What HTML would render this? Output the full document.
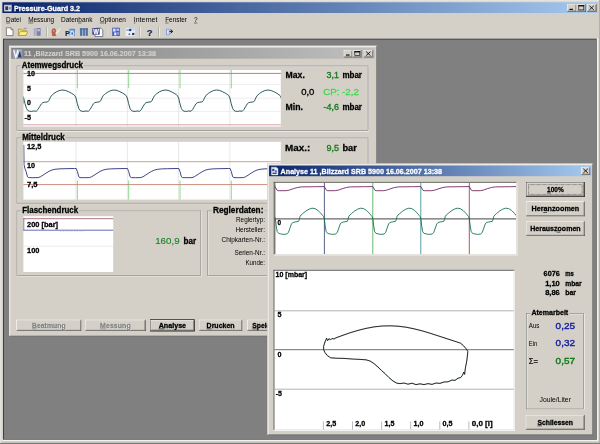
<!DOCTYPE html>
<html lang="de">
<head>
<meta charset="utf-8">
<title>Pressure-Guard 3.2</title>
<style>
html,body{margin:0;padding:0;background:#d4d0c8;overflow:hidden}
svg{display:block;will-change:transform}
svg text{font-family:"Liberation Sans",sans-serif;white-space:pre}
</style>
</head>
<body>
<svg width="600" height="444" viewBox="0 0 600 444">
<filter id="soft" x="-1%" y="-1%" width="102%" height="102%"><feGaussianBlur stdDeviation="0.35"/></filter>
<rect x="-5" y="-5" width="610" height="454" fill="#d4d0c8"/>
<g filter="url(#soft)">
<rect x="-5" y="-5" width="610" height="454" fill="#d4d0c8"/>
<rect x="0" y="0" width="600" height="444" fill="#d4d0c8"/>
<rect x="0" y="0" width="600" height="0.6" fill="#d4d0c8"/>
<rect x="0" y="0" width="0.6" height="444" fill="#d4d0c8"/>
<rect x="0.6" y="0.6" width="598.8" height="0.6" fill="#fff"/>
<rect x="0.6" y="0.6" width="0.6" height="442.8" fill="#fff"/>
<rect x="0" y="443.4" width="600" height="0.6" fill="#404040"/>
<rect x="599.6" y="0" width="0.4" height="444" fill="#808080"/>
<rect x="0.6" y="442.8" width="599" height="0.6" fill="#808080"/>
<defs><linearGradient id="ga" x1="0" x2="1" y1="0" y2="0"><stop offset="0" stop-color="#0a246a"/><stop offset="1" stop-color="#a6caf0"/></linearGradient><linearGradient id="gi" x1="0" x2="1" y1="0" y2="0"><stop offset="0" stop-color="#808080"/><stop offset="1" stop-color="#c0c0c0"/></linearGradient><clipPath id="c1"><rect x="23.4" y="70" width="257.4" height="56.6"/></clipPath><clipPath id="c2"><rect x="23.4" y="141.8" width="257.4" height="57.8"/></clipPath><clipPath id="c3"><rect x="274.6" y="182.4" width="241.4" height="71.6"/></clipPath></defs>
<rect x="2.4" y="2.3" width="595.2" height="10.7" fill="url(#ga)"/>
<rect x="4.2" y="4.2" width="7.4" height="7.2" fill="#e8e8f0"/>
<rect x="4.2" y="4.2" width="7.4" height="1" fill="#1c2c80"/>
<rect x="5.3" y="6.3" width="2.9" height="3.9" fill="#303848"/>
<rect x="8.8" y="6.8" width="2" height="2.8" fill="#8090b0"/>
<text x="14" y="10.9" font-size="7.6" fill="#fff" stroke="#fff" stroke-width="0.28" font-weight="bold" textLength="66" lengthAdjust="spacingAndGlyphs">Pressure-Guard 3.2</text>
<rect x="567.2" y="4" width="9.4" height="7.7" fill="#d4d0c8"/>
<rect x="567.2" y="4" width="9.4" height="0.6" fill="#fff"/>
<rect x="567.2" y="4" width="0.6" height="7.7" fill="#fff"/>
<rect x="567.2" y="11.1" width="9.4" height="0.6" fill="#404040"/>
<rect x="576" y="4" width="0.6" height="7.7" fill="#404040"/>
<rect x="567.8" y="4.6" width="8.2" height="0.6" fill="#d4d0c8"/>
<rect x="567.8" y="4.6" width="0.6" height="6.5" fill="#d4d0c8"/>
<rect x="567.8" y="10.5" width="8.2" height="0.6" fill="#808080"/>
<rect x="575.4" y="4.6" width="0.6" height="6.5" fill="#808080"/>
<rect x="569.4" y="8.8" width="3.6" height="1.1" fill="#000"/>
<rect x="576.6" y="4" width="9.3" height="7.7" fill="#d4d0c8"/>
<rect x="576.6" y="4" width="9.3" height="0.6" fill="#fff"/>
<rect x="576.6" y="4" width="0.6" height="7.7" fill="#fff"/>
<rect x="576.6" y="11.1" width="9.3" height="0.6" fill="#404040"/>
<rect x="585.3" y="4" width="0.6" height="7.7" fill="#404040"/>
<rect x="577.2" y="4.6" width="8.1" height="0.6" fill="#d4d0c8"/>
<rect x="577.2" y="4.6" width="0.6" height="6.5" fill="#d4d0c8"/>
<rect x="577.2" y="10.5" width="8.1" height="0.6" fill="#808080"/>
<rect x="584.7" y="4.6" width="0.6" height="6.5" fill="#808080"/>
<rect x="578.8" y="5.6" width="5" height="4.3" fill="none" stroke="#000" stroke-width="0.6"/>
<rect x="578.5" y="5.3" width="5.6" height="1.1" fill="#000"/>
<rect x="587.1" y="4" width="9.4" height="7.7" fill="#d4d0c8"/>
<rect x="587.1" y="4" width="9.4" height="0.6" fill="#fff"/>
<rect x="587.1" y="4" width="0.6" height="7.7" fill="#fff"/>
<rect x="587.1" y="11.1" width="9.4" height="0.6" fill="#404040"/>
<rect x="595.9" y="4" width="0.6" height="7.7" fill="#404040"/>
<rect x="587.7" y="4.6" width="8.2" height="0.6" fill="#d4d0c8"/>
<rect x="587.7" y="4.6" width="0.6" height="6.5" fill="#d4d0c8"/>
<rect x="587.7" y="10.5" width="8.2" height="0.6" fill="#808080"/>
<rect x="595.3" y="4.6" width="0.6" height="6.5" fill="#808080"/>
<path d="M589.4 5.75 L593.8 9.85 M593.8 5.75 L589.4 9.85" stroke="#000" stroke-width="0.85" fill="none"/>
<text x="6" y="21.9" font-size="6.6" fill="#000" textLength="15" lengthAdjust="spacingAndGlyphs">Datei</text>
<rect x="6" y="22.7" width="4.2" height="0.6" fill="#000" opacity="0.75"/>
<text x="28.2" y="21.9" font-size="6.6" fill="#000" textLength="26" lengthAdjust="spacingAndGlyphs">Messung</text>
<rect x="28.2" y="22.7" width="5.1" height="0.6" fill="#000" opacity="0.75"/>
<text x="61" y="21.9" font-size="6.6" fill="#000" textLength="31.5" lengthAdjust="spacingAndGlyphs">Datenbank</text>
<rect x="78" y="22.7" width="3.4" height="0.6" fill="#000" opacity="0.75"/>
<text x="99.7" y="21.9" font-size="6.6" fill="#000" textLength="26.2" lengthAdjust="spacingAndGlyphs">Optionen</text>
<rect x="99.7" y="22.7" width="4.7" height="0.6" fill="#000" opacity="0.75"/>
<text x="133.8" y="21.9" font-size="6.6" fill="#000" textLength="23.6" lengthAdjust="spacingAndGlyphs">Internet</text>
<rect x="133.8" y="22.7" width="1.6" height="0.6" fill="#000" opacity="0.75"/>
<text x="165.2" y="21.9" font-size="6.6" fill="#000" textLength="21.8" lengthAdjust="spacingAndGlyphs">Fenster</text>
<rect x="165.2" y="22.7" width="3.4" height="0.6" fill="#000" opacity="0.75"/>
<text x="194" y="21.9" font-size="6.6" fill="#000" textLength="3.6" lengthAdjust="spacingAndGlyphs">?</text>
<rect x="194" y="22.7" width="3.4" height="0.6" fill="#000" opacity="0.75"/>
<path d="M6.4 27.8 H11 L13 29.8 V35.6 H6.4 Z" stroke="#404040" stroke-width="0.6" fill="#fff"/>
<path d="M11 27.8 V29.8 H13" stroke="#404040" stroke-width="0.5" fill="none"/>
<path d="M18.4 29.2 H21.4 L22.2 30.2 H26 V35.4 H18.4 Z" stroke="#807020" stroke-width="0.5" fill="#f0d850"/>
<path d="M18.4 35.4 L20.4 31.6 H27.6 L26 35.4 Z" stroke="#807020" stroke-width="0.5" fill="#fff080"/>
<path d="M23.6 28.6 Q25.6 27.4 27 28.8" stroke="#606060" stroke-width="0.5" fill="none"/>
<rect x="33.6" y="28" width="2.4" height="7.8" fill="#a8b0c8"/>
<rect x="36.6" y="28" width="4" height="7.8" fill="#7880b0"/>
<rect x="37.4" y="29.2" width="2.4" height="2" fill="#c8ccdc"/>
<rect x="46.3" y="26.8" width="0.6" height="10.2" fill="#909090"/>
<rect x="46.9" y="26.8" width="0.6" height="10.2" fill="#fff"/>
<path d="M52.0 34.0 Q50.8 30.6 52.6 28.8 Q54.6 27.6 55.8 29.4 Q56.6 31.6 55.2 33.0 L56.4 35.6 Q53.6 36.8 52.0 35.6 Z" stroke="none" stroke-width="0" fill="#b8604c"/>
<path d="M52.8 30.2 Q53.8 29.2 54.8 30.0 Q55.0 31.8 53.8 32.6 Q52.8 31.6 52.8 30.2 Z" stroke="none" stroke-width="0" fill="#d89078"/>
<path d="M55.4 33.6 L59.8 28.0 L60.6 28.8 L56.8 34.6 Z" stroke="none" stroke-width="0" fill="#f4ecdc"/>
<path d="M55.0 35.2 L56.2 33.4" stroke="#a08070" stroke-width="0.5" fill="none"/>
<rect x="69.6" y="28.8" width="5.2" height="6.8" fill="#3c78c8"/>
<rect x="70.4" y="29.6" width="3.6" height="1.6" fill="#80b0e8"/>
<text x="65.3" y="35.7" font-size="6.6" fill="#101c50" stroke="#101c50" stroke-width="0.2" font-weight="bold" textLength="4.4" lengthAdjust="spacingAndGlyphs">P</text>
<text x="70" y="35.7" font-size="6.6" fill="#d8e8ff" stroke="#d8e8ff" stroke-width="0.28" font-weight="bold" textLength="4.4" lengthAdjust="spacingAndGlyphs">D</text>
<rect x="79.8" y="28.4" width="8.2" height="7.4" fill="#a8b8d0"/>
<rect x="80" y="28.4" width="2" height="7.4" fill="#5070a0"/>
<rect x="82.9" y="28.4" width="2" height="7.4" fill="#5878a8"/>
<rect x="85.8" y="28.4" width="2" height="7.4" fill="#5070a0"/>
<rect x="79.8" y="28.4" width="8.2" height="1" fill="#486898"/>
<rect x="79.8" y="31.6" width="8.2" height="0.6" fill="#7890b8" opacity="0.6"/>
<path d="M96.0 28.2 H101.0 L102.8 30.0 V36.6 H95.0 V34 Z" stroke="#303050" stroke-width="0.6" fill="#fff"/>
<rect x="92.4" y="28" width="7.2" height="6.6" fill="#202c78"/>
<text x="93.2" y="34" font-size="6.4" fill="#fff" stroke="#fff" stroke-width="0.28" font-weight="bold" textLength="5.6" lengthAdjust="spacingAndGlyphs">W</text>
<rect x="106" y="26.8" width="0.6" height="10.2" fill="#909090"/>
<rect x="106.6" y="26.8" width="0.6" height="10.2" fill="#fff"/>
<rect x="112.2" y="27.7" width="7.6" height="8.3" fill="#4460c0"/>
<rect x="113" y="28.6" width="2.6" height="3" fill="#e8d8ec"/>
<rect x="116.4" y="28.6" width="2.6" height="2.4" fill="#b0c0f0"/>
<rect x="114.2" y="32.4" width="2.2" height="3" fill="#f0e4f0"/>
<rect x="117" y="32" width="2" height="3" fill="#8098e0"/>
<rect x="125.6" y="28" width="9.4" height="8" fill="#eaf0f8"/>
<rect x="129.4" y="28" width="5.6" height="2.6" fill="#c8d8ec"/>
<circle cx="130.2" cy="30.0" r="1.25" fill="#203870"/><circle cx="133.2" cy="34.0" r="1.3" fill="#203870"/><circle cx="129.4" cy="34.2" r="0.9" fill="#4868a8"/>
<line x1="126.2" y1="30" x2="129.2" y2="30" stroke="#384870" stroke-width="0.7"/>
<rect x="139.6" y="26.8" width="0.6" height="10.2" fill="#909090"/>
<rect x="140.2" y="26.8" width="0.6" height="10.2" fill="#fff"/>
<text x="150.2" y="35.8" font-size="9.4" fill="#6088d0" stroke="#6088d0" stroke-width="0.1" text-anchor="middle" font-weight="bold" opacity="0.6">?</text>
<text x="149.5" y="35.5" font-size="9.4" fill="#202c58" stroke="#202c58" stroke-width="0.1" text-anchor="middle" font-weight="bold">?</text>
<rect x="158.5" y="26.8" width="0.6" height="10.2" fill="#909090"/>
<rect x="159.1" y="26.8" width="0.6" height="10.2" fill="#fff"/>
<rect x="164.8" y="27.8" width="5.8" height="8.4" fill="#c4d0e4"/>
<rect x="166" y="28.8" width="3.6" height="6.4" fill="#88a0c8"/>
<rect x="167" y="29.6" width="1.8" height="4.8" fill="#dce6f4"/>
<path d="M169.4 31.4 H172.2 M170.6 29.6 L172.8 31.4 L170.6 33.2" stroke="#101828" stroke-width="1" fill="none"/>
<rect x="2.4" y="38.4" width="596" height="402.6" fill="#f4f2ee"/>
<rect x="2.9" y="38.6" width="593.8" height="401.1" fill="#404040"/>
<rect x="4" y="39.6" width="592.7" height="400.1" fill="#808080"/>
<rect x="9" y="45.7" width="368.2" height="291.1" fill="#d4d0c8"/>
<rect x="9" y="45.7" width="368.2" height="0.6" fill="#d4d0c8"/>
<rect x="9" y="45.7" width="0.6" height="291.1" fill="#d4d0c8"/>
<rect x="9" y="336.2" width="368.2" height="0.6" fill="#404040"/>
<rect x="376.6" y="45.7" width="0.6" height="291.1" fill="#404040"/>
<rect x="9.6" y="46.3" width="367" height="0.6" fill="#fff"/>
<rect x="9.6" y="46.3" width="0.6" height="289.9" fill="#fff"/>
<rect x="9.6" y="335.6" width="367" height="0.6" fill="#808080"/>
<rect x="376" y="46.3" width="0.6" height="289.9" fill="#808080"/>
<rect x="11.3" y="48" width="363.5" height="10.7" fill="url(#gi)"/>
<rect x="12.8" y="49.2" width="9.4" height="8.8" fill="#98a4bc"/>
<path d="M13.6 50.0 L15.8 57.2 L18.0 50.0" stroke="#f4f6fc" stroke-width="1.3" fill="none"/>
<path d="M17.2 57.4 L19.6 50.2 L21.8 57.4 Z" stroke="none" stroke-width="0" fill="#283c78"/>
<path d="M17.0 57.4 L19.4 50.2" stroke="#e8ecf8" stroke-width="0.9" fill="none"/>
<text x="24" y="55.9" font-size="7.4" fill="#d4d0c8" stroke="#d4d0c8" stroke-width="0.15" font-weight="bold" textLength="132" lengthAdjust="spacingAndGlyphs">11 ,Blizzard SRB 5900 16.06.2007 13:38</text>
<rect x="343.8" y="50" width="8.8" height="7.4" fill="#d4d0c8"/>
<rect x="343.8" y="50" width="8.8" height="0.6" fill="#fff"/>
<rect x="343.8" y="50" width="0.6" height="7.4" fill="#fff"/>
<rect x="343.8" y="56.8" width="8.8" height="0.6" fill="#404040"/>
<rect x="352" y="50" width="0.6" height="7.4" fill="#404040"/>
<rect x="344.4" y="50.6" width="7.6" height="0.6" fill="#d4d0c8"/>
<rect x="344.4" y="50.6" width="0.6" height="6.2" fill="#d4d0c8"/>
<rect x="344.4" y="56.2" width="7.6" height="0.6" fill="#808080"/>
<rect x="351.4" y="50.6" width="0.6" height="6.2" fill="#808080"/>
<rect x="346" y="54.5" width="3.6" height="1.1" fill="#000"/>
<rect x="352.6" y="50" width="8.8" height="7.4" fill="#d4d0c8"/>
<rect x="352.6" y="50" width="8.8" height="0.6" fill="#fff"/>
<rect x="352.6" y="50" width="0.6" height="7.4" fill="#fff"/>
<rect x="352.6" y="56.8" width="8.8" height="0.6" fill="#404040"/>
<rect x="360.8" y="50" width="0.6" height="7.4" fill="#404040"/>
<rect x="353.2" y="50.6" width="7.6" height="0.6" fill="#d4d0c8"/>
<rect x="353.2" y="50.6" width="0.6" height="6.2" fill="#d4d0c8"/>
<rect x="353.2" y="56.2" width="7.6" height="0.6" fill="#808080"/>
<rect x="360.2" y="50.6" width="0.6" height="6.2" fill="#808080"/>
<rect x="354.8" y="51.6" width="5" height="4" fill="none" stroke="#000" stroke-width="0.6"/>
<rect x="354.5" y="51.3" width="5.6" height="1.1" fill="#000"/>
<rect x="363.8" y="50" width="9.4" height="7.4" fill="#d4d0c8"/>
<rect x="363.8" y="50" width="9.4" height="0.6" fill="#fff"/>
<rect x="363.8" y="50" width="0.6" height="7.4" fill="#fff"/>
<rect x="363.8" y="56.8" width="9.4" height="0.6" fill="#404040"/>
<rect x="372.6" y="50" width="0.6" height="7.4" fill="#404040"/>
<rect x="364.4" y="50.6" width="8.2" height="0.6" fill="#d4d0c8"/>
<rect x="364.4" y="50.6" width="0.6" height="6.2" fill="#d4d0c8"/>
<rect x="364.4" y="56.2" width="8.2" height="0.6" fill="#808080"/>
<rect x="372" y="50.6" width="0.6" height="6.2" fill="#808080"/>
<path d="M366.1 51.6 L370.5 55.7 M370.5 51.6 L366.1 55.7" stroke="#000" stroke-width="0.85" fill="none"/>
<rect x="17.6" y="66.6" width="351.1" height="64.6" fill="none" stroke="#fff" stroke-width="0.6"/>
<rect x="17" y="66" width="351.1" height="64.6" fill="none" stroke="#808080" stroke-width="0.6"/>
<rect x="20.8" y="64" width="63.2" height="4" fill="#d4d0c8"/>
<text x="21.8" y="67.5" font-size="8.4" fill="#000" stroke="#000" stroke-width="0.28" font-weight="bold" textLength="61.2" lengthAdjust="spacingAndGlyphs">Atemwegsdruck</text>
<rect x="23.4" y="70" width="257.4" height="56.6" fill="#fff"/>
<line x1="76" y1="70" x2="76" y2="126.6" stroke="#d4d8d4" stroke-width="0.6"/>
<line x1="127.3" y1="70" x2="127.3" y2="126.6" stroke="#d4d8d4" stroke-width="0.6"/>
<line x1="178.6" y1="70" x2="178.6" y2="126.6" stroke="#d4d8d4" stroke-width="0.6"/>
<line x1="229.9" y1="70" x2="229.9" y2="126.6" stroke="#d4d8d4" stroke-width="0.6"/>
<line x1="23.4" y1="84.6" x2="280.8" y2="84.6" stroke="#e0e0e0" stroke-width="0.6"/>
<line x1="23.4" y1="98.2" x2="280.8" y2="98.2" stroke="#e0e0e0" stroke-width="0.6"/>
<line x1="23.4" y1="111.6" x2="280.8" y2="111.6" stroke="#e0e0e0" stroke-width="0.6"/>
<line x1="23.4" y1="73.4" x2="280.8" y2="73.4" stroke="#b85860" stroke-width="0.8"/>
<line x1="23.4" y1="124.8" x2="280.8" y2="124.8" stroke="#c88088" stroke-width="0.7"/>
<line x1="77.4" y1="70" x2="77.4" y2="88.2" stroke="#50c850" stroke-width="0.65"/>
<line x1="128.7" y1="70" x2="128.7" y2="88.2" stroke="#50c850" stroke-width="0.65"/>
<line x1="180" y1="70" x2="180" y2="88.2" stroke="#50c850" stroke-width="0.65"/>
<line x1="231.3" y1="70" x2="231.3" y2="88.2" stroke="#50c850" stroke-width="0.65"/>
<path d="M22.4 95.5 L23.63 98 L24.95 103.5 L26.49 108.6 L27.71 110.4 L29.35 111.2 L31.59 111.4 L33.64 111 L36.29 111.2 L37.93 109.6 L39.76 106.4 L41.4 103.8 L42.83 102.6 L44.87 102.2 L47.73 101.9 L48.75 100.8 L50.18 97.8 L51.41 95.6 L52.43 94.8 L54.06 93.4 L56.52 91.8 L59.17 90.6 L62.24 90 L65.3 90.4 L68.36 91.6 L71.43 93.2 L73.88 94.8 L74.8 95.5 L76 98 L77.3 103.5 L78.8 108.6 L80 110.4 L81.6 111.2 L83.8 111.4 L85.8 111 L88.4 111.2 L90 109.6 L91.8 106.4 L93.4 103.8 L94.8 102.6 L96.8 102.2 L99.6 101.9 L100.6 100.8 L102 97.8 L103.2 95.6 L104.2 94.8 L105.8 93.4 L108.2 91.8 L110.8 90.6 L113.8 90 L116.8 90.4 L119.8 91.6 L122.8 93.2 L125.2 94.8 L126.1 95.5 L127.3 98 L128.6 103.5 L130.1 108.6 L131.3 110.4 L132.9 111.2 L135.1 111.4 L137.1 111 L139.7 111.2 L141.3 109.6 L143.1 106.4 L144.7 103.8 L146.1 102.6 L148.1 102.2 L150.9 101.9 L151.9 100.8 L153.3 97.8 L154.5 95.6 L155.5 94.8 L157.1 93.4 L159.5 91.8 L162.1 90.6 L165.1 90 L168.1 90.4 L171.1 91.6 L174.1 93.2 L176.5 94.8 L177.4 95.5 L178.6 98 L179.9 103.5 L181.4 108.6 L182.6 110.4 L184.2 111.2 L186.4 111.4 L188.4 111 L191 111.2 L192.6 109.6 L194.4 106.4 L196 103.8 L197.4 102.6 L199.4 102.2 L202.2 101.9 L203.2 100.8 L204.6 97.8 L205.8 95.6 L206.8 94.8 L208.4 93.4 L210.8 91.8 L213.4 90.6 L216.4 90 L219.4 90.4 L222.4 91.6 L225.4 93.2 L227.8 94.8 L228.7 95.5 L229.9 98 L231.2 103.5 L232.7 108.6 L233.9 110.4 L235.5 111.2 L237.7 111.4 L239.7 111 L242.3 111.2 L243.9 109.6 L245.7 106.4 L247.3 103.8 L248.7 102.6 L250.7 102.2 L253.5 101.9 L254.5 100.8 L255.9 97.8 L257.1 95.6 L258.1 94.8 L259.7 93.4 L262.1 91.8 L264.7 90.6 L267.7 90 L270.7 90.4 L273.7 91.6 L276.7 93.2 L279.1 94.8 L280 95.5 L281.2 98 L282.5 103.5 L284 108.6 L285.2 110.4 L286.8 111.2 L289 111.4 L291 111 L293.6 111.2 L295.2 109.6 L297 106.4 L298.6 103.8 L300 102.6 L302 102.2 L304.8 101.9 L305.8 100.8 L307.2 97.8 L308.4 95.6 L309.4 94.8 L311 93.4 L313.4 91.8 L316 90.6 L319 90 L322 90.4 L325 91.6 L328 93.2 L330.4 94.8 L331.3 95.5" stroke="#083c40" stroke-width="0.85" fill="none" stroke-linejoin="round" clip-path="url(#c1)"/>
<line x1="23.7" y1="98" x2="23.7" y2="103.5" stroke="#40c040" stroke-width="0.7"/>
<text x="27" y="76.4" font-size="7.8" fill="#000" stroke="#000" stroke-width="0.28" font-weight="bold" textLength="8" lengthAdjust="spacingAndGlyphs">10</text>
<text x="27" y="91" font-size="7.8" fill="#000" stroke="#000" stroke-width="0.28" font-weight="bold" textLength="3.9" lengthAdjust="spacingAndGlyphs">5</text>
<text x="27" y="105.4" font-size="7.8" fill="#000" stroke="#000" stroke-width="0.28" font-weight="bold" textLength="3.9" lengthAdjust="spacingAndGlyphs">0</text>
<text x="24.6" y="119.6" font-size="7.8" fill="#000" stroke="#000" stroke-width="0.28" font-weight="bold" textLength="6.4" lengthAdjust="spacingAndGlyphs">-5</text>
<text x="285.6" y="78.3" font-size="9.8" fill="#000" stroke="#000" stroke-width="0.28" font-weight="bold" textLength="19.2" lengthAdjust="spacingAndGlyphs">Max.</text>
<text x="339" y="78.4" font-size="9.2" fill="#107818" stroke="#107818" stroke-width="0.3" text-anchor="end" textLength="12.4" lengthAdjust="spacingAndGlyphs">3,1</text>
<text x="342.4" y="78.3" font-size="9" fill="#000" stroke="#000" stroke-width="0.28" font-weight="bold" textLength="19.6" lengthAdjust="spacingAndGlyphs">mbar</text>
<text x="314.4" y="95.2" font-size="9.2" fill="#000" stroke="#000" stroke-width="0.3" text-anchor="end" textLength="13.2" lengthAdjust="spacingAndGlyphs">0,0</text>
<text x="323.2" y="95.2" font-size="9.2" fill="#40d850" stroke="#40d850" stroke-width="0.3" textLength="35.6" lengthAdjust="spacingAndGlyphs">CP: -2,2</text>
<text x="285.6" y="110.2" font-size="9.8" fill="#000" stroke="#000" stroke-width="0.28" font-weight="bold" textLength="17.4" lengthAdjust="spacingAndGlyphs">Min.</text>
<text x="339" y="110.3" font-size="9.2" fill="#107818" stroke="#107818" stroke-width="0.3" text-anchor="end" textLength="15.4" lengthAdjust="spacingAndGlyphs">-4,6</text>
<text x="342.4" y="110.2" font-size="9" fill="#000" stroke="#000" stroke-width="0.28" font-weight="bold" textLength="19.6" lengthAdjust="spacingAndGlyphs">mbar</text>
<rect x="17.6" y="138.6" width="351.1" height="65.2" fill="none" stroke="#fff" stroke-width="0.6"/>
<rect x="17" y="138" width="351.1" height="65.2" fill="none" stroke="#808080" stroke-width="0.6"/>
<rect x="21.2" y="136" width="44.6" height="4" fill="#d4d0c8"/>
<text x="22.2" y="140" font-size="8.4" fill="#000" stroke="#000" stroke-width="0.28" font-weight="bold" textLength="42.6" lengthAdjust="spacingAndGlyphs">Mitteldruck</text>
<rect x="23.4" y="141.8" width="257.4" height="57.8" fill="#fff"/>
<line x1="76" y1="141.8" x2="76" y2="199.6" stroke="#d4d8d4" stroke-width="0.6"/>
<line x1="127.3" y1="141.8" x2="127.3" y2="199.6" stroke="#d4d8d4" stroke-width="0.6"/>
<line x1="178.6" y1="141.8" x2="178.6" y2="199.6" stroke="#d4d8d4" stroke-width="0.6"/>
<line x1="229.9" y1="141.8" x2="229.9" y2="199.6" stroke="#d4d8d4" stroke-width="0.6"/>
<line x1="23.4" y1="161.7" x2="280.8" y2="161.7" stroke="#b87868" stroke-width="0.7"/>
<line x1="23.4" y1="184.6" x2="280.8" y2="184.6" stroke="#c07060" stroke-width="0.8"/>
<line x1="77.4" y1="180.6" x2="77.4" y2="199.6" stroke="#50c850" stroke-width="0.65"/>
<line x1="128.7" y1="180.6" x2="128.7" y2="199.6" stroke="#50c850" stroke-width="0.65"/>
<line x1="180" y1="180.6" x2="180" y2="199.6" stroke="#50c850" stroke-width="0.65"/>
<line x1="231.3" y1="180.6" x2="231.3" y2="199.6" stroke="#50c850" stroke-width="0.65"/>
<path d="M23.8 145 L24 164.4 L24.9 168.5 L26.1 171.6 L27.5 176.8 L28.7 177.6 L32.9 177.7 L38.1 177.6 L40.3 176.8 L42.9 175.2 L45.9 173.2 L48.9 171.4 L51.9 170 L54.9 169.3 L58.9 168.9 L64.9 168.7 L74.5 168.5 L76.2 168.5 L77.4 171.6 L78.8 176.8 L80 177.6 L84.2 177.7 L89.4 177.6 L91.6 176.8 L94.2 175.2 L97.2 173.2 L100.2 171.4 L103.2 170 L106.2 169.3 L110.2 168.9 L116.2 168.7 L125.8 168.5 L127.5 168.5 L128.7 171.6 L130.1 176.8 L131.3 177.6 L135.5 177.7 L140.7 177.6 L142.9 176.8 L145.5 175.2 L148.5 173.2 L151.5 171.4 L154.5 170 L157.5 169.3 L161.5 168.9 L167.5 168.7 L177.1 168.5 L178.8 168.5 L180 171.6 L181.4 176.8 L182.6 177.6 L186.8 177.7 L192 177.6 L194.2 176.8 L196.8 175.2 L199.8 173.2 L202.8 171.4 L205.8 170 L208.8 169.3 L212.8 168.9 L218.8 168.7 L228.4 168.5 L230.1 168.5 L231.3 171.6 L232.7 176.8 L233.9 177.6 L238.1 177.7 L243.3 177.6 L245.5 176.8 L248.1 175.2 L251.1 173.2 L254.1 171.4 L257.1 170 L260.1 169.3 L264.1 168.9 L270.1 168.7 L279.7 168.5 L281.4 168.5" stroke="#1c2470" stroke-width="0.85" fill="none" stroke-linejoin="round" clip-path="url(#c2)"/>
<text x="27" y="149.2" font-size="7.8" fill="#000" stroke="#000" stroke-width="0.28" font-weight="bold" textLength="14.4" lengthAdjust="spacingAndGlyphs">12,5</text>
<text x="27" y="168" font-size="7.8" fill="#000" stroke="#000" stroke-width="0.28" font-weight="bold" textLength="8" lengthAdjust="spacingAndGlyphs">10</text>
<text x="27" y="187" font-size="7.8" fill="#000" stroke="#000" stroke-width="0.28" font-weight="bold" textLength="10.6" lengthAdjust="spacingAndGlyphs">7,5</text>
<text x="285" y="151.4" font-size="9.8" fill="#000" stroke="#000" stroke-width="0.28" font-weight="bold" textLength="25.2" lengthAdjust="spacingAndGlyphs">Max.:</text>
<text x="339" y="151.4" font-size="9.2" fill="#107818" stroke="#107818" stroke-width="0.3" text-anchor="end" textLength="12.6" lengthAdjust="spacingAndGlyphs">9,5</text>
<text x="342.4" y="151.4" font-size="9" fill="#000" stroke="#000" stroke-width="0.28" font-weight="bold" textLength="14.4" lengthAdjust="spacingAndGlyphs">bar</text>
<rect x="17.6" y="211.6" width="183.8" height="64.4" fill="none" stroke="#fff" stroke-width="0.6"/>
<rect x="17" y="211" width="183.8" height="64.4" fill="none" stroke="#808080" stroke-width="0.6"/>
<rect x="21.2" y="209" width="58" height="4" fill="#d4d0c8"/>
<text x="22.2" y="213.2" font-size="8.4" fill="#000" stroke="#000" stroke-width="0.28" font-weight="bold" textLength="56" lengthAdjust="spacingAndGlyphs">Flaschendruck</text>
<rect x="23.4" y="216.2" width="89.8" height="55.8" fill="#fff"/>
<line x1="23.4" y1="218.7" x2="113.2" y2="218.7" stroke="#904860" stroke-width="0.75"/>
<line x1="23.4" y1="230.2" x2="113.2" y2="230.2" stroke="#4048a0" stroke-width="0.8"/>
<line x1="23.8" y1="218" x2="23.8" y2="230.4" stroke="#5058b0" stroke-width="0.7"/>
<line x1="60" y1="231" x2="84" y2="231" stroke="#9098c8" stroke-width="0.6" stroke-dasharray="1.2 1.6"/>
<line x1="23.4" y1="246.2" x2="113.2" y2="246.2" stroke="#e0e0e0" stroke-width="0.6"/>
<text x="27" y="227.2" font-size="7.6" fill="#000" stroke="#000" stroke-width="0.28" font-weight="bold" textLength="31" lengthAdjust="spacingAndGlyphs">200 [bar]</text>
<text x="27" y="252.8" font-size="7.6" fill="#000" stroke="#000" stroke-width="0.28" font-weight="bold" textLength="12.4" lengthAdjust="spacingAndGlyphs">100</text>
<text x="179.6" y="244.2" font-size="9.2" fill="#188828" stroke="#188828" stroke-width="0.15" text-anchor="end" textLength="24.4" lengthAdjust="spacingAndGlyphs">160,9</text>
<text x="183.6" y="244" font-size="8.2" fill="#000" stroke="#000" stroke-width="0.28" font-weight="bold" textLength="12.6" lengthAdjust="spacingAndGlyphs">bar</text>
<rect x="208" y="211.6" width="160.7" height="64.4" fill="none" stroke="#fff" stroke-width="0.6"/>
<rect x="207.4" y="211" width="160.7" height="64.4" fill="none" stroke="#808080" stroke-width="0.6"/>
<rect x="212" y="207" width="52.4" height="7" fill="#d4d0c8"/>
<text x="213" y="213.2" font-size="8.4" fill="#000" stroke="#000" stroke-width="0.28" font-weight="bold" textLength="50.4" lengthAdjust="spacingAndGlyphs">Reglerdaten:</text>
<text x="265" y="221.6" font-size="6.6" fill="#000" text-anchor="end" textLength="29" lengthAdjust="spacingAndGlyphs">Reglertyp:</text>
<text x="265" y="231.8" font-size="6.6" fill="#000" text-anchor="end" textLength="29.6" lengthAdjust="spacingAndGlyphs">Hersteller:</text>
<text x="265" y="242.2" font-size="6.6" fill="#000" text-anchor="end" textLength="43.4" lengthAdjust="spacingAndGlyphs">Chipkarten-Nr.:</text>
<text x="265" y="254.6" font-size="6.6" fill="#000" text-anchor="end" textLength="30.6" lengthAdjust="spacingAndGlyphs">Serien-Nr.:</text>
<text x="265" y="264.8" font-size="6.6" fill="#000" text-anchor="end" textLength="19.6" lengthAdjust="spacingAndGlyphs">Kunde:</text>
<rect x="16.4" y="319.8" width="64.8" height="11.2" fill="#d4d0c8"/>
<rect x="16.4" y="319.8" width="64.8" height="0.6" fill="#fff"/>
<rect x="16.4" y="319.8" width="0.6" height="11.2" fill="#fff"/>
<rect x="16.4" y="330.4" width="64.8" height="0.6" fill="#404040"/>
<rect x="80.6" y="319.8" width="0.6" height="11.2" fill="#404040"/>
<rect x="17" y="320.4" width="63.6" height="0.6" fill="#d4d0c8"/>
<rect x="17" y="320.4" width="0.6" height="10" fill="#d4d0c8"/>
<rect x="17" y="329.8" width="63.6" height="0.6" fill="#808080"/>
<rect x="80" y="320.4" width="0.6" height="10" fill="#808080"/>
<text x="49.3" y="328.2" font-size="6.6" fill="#fff" stroke="#fff" stroke-width="0.28" text-anchor="middle" font-weight="bold" textLength="33.6" lengthAdjust="spacingAndGlyphs">Beatmung</text>
<text x="48.8" y="327.7" font-size="6.6" fill="#808080" stroke="#808080" stroke-width="0.28" text-anchor="middle" font-weight="bold" textLength="33.6" lengthAdjust="spacingAndGlyphs">Beatmung</text>
<rect x="32" y="328.6" width="4.6" height="0.6" fill="#808080"/>
<rect x="85.2" y="319.8" width="60.4" height="11.2" fill="#d4d0c8"/>
<rect x="85.2" y="319.8" width="60.4" height="0.6" fill="#fff"/>
<rect x="85.2" y="319.8" width="0.6" height="11.2" fill="#fff"/>
<rect x="85.2" y="330.4" width="60.4" height="0.6" fill="#404040"/>
<rect x="145" y="319.8" width="0.6" height="11.2" fill="#404040"/>
<rect x="85.8" y="320.4" width="59.2" height="0.6" fill="#d4d0c8"/>
<rect x="85.8" y="320.4" width="0.6" height="10" fill="#d4d0c8"/>
<rect x="85.8" y="329.8" width="59.2" height="0.6" fill="#808080"/>
<rect x="144.4" y="320.4" width="0.6" height="10" fill="#808080"/>
<text x="115.9" y="328.2" font-size="6.6" fill="#fff" stroke="#fff" stroke-width="0.28" text-anchor="middle" font-weight="bold" textLength="30.6" lengthAdjust="spacingAndGlyphs">Messung</text>
<text x="115.4" y="327.7" font-size="6.6" fill="#808080" stroke="#808080" stroke-width="0.28" text-anchor="middle" font-weight="bold" textLength="30.6" lengthAdjust="spacingAndGlyphs">Messung</text>
<rect x="100.1" y="328.6" width="5.8" height="0.6" fill="#808080"/>
<rect x="150" y="319.4" width="44.8" height="12" fill="#000"/>
<rect x="150.6" y="320" width="43.6" height="10.8" fill="#d4d0c8"/>
<rect x="150.6" y="320" width="43.6" height="0.6" fill="#fff"/>
<rect x="150.6" y="320" width="0.6" height="10.8" fill="#fff"/>
<rect x="150.6" y="330.2" width="43.6" height="0.6" fill="#404040"/>
<rect x="193.6" y="320" width="0.6" height="10.8" fill="#404040"/>
<rect x="151.2" y="320.6" width="42.4" height="0.6" fill="#d4d0c8"/>
<rect x="151.2" y="320.6" width="0.6" height="9.6" fill="#d4d0c8"/>
<rect x="151.2" y="329.6" width="42.4" height="0.6" fill="#808080"/>
<rect x="193" y="320.6" width="0.6" height="9.6" fill="#808080"/>
<text x="172.4" y="327.7" font-size="6.6" fill="#000" stroke="#000" stroke-width="0.28" text-anchor="middle" font-weight="bold" textLength="27.4" lengthAdjust="spacingAndGlyphs">Analyse</text>
<rect x="158.7" y="328.6" width="5.2" height="0.6" fill="#000"/>
<rect x="199" y="319.8" width="43.2" height="11.2" fill="#d4d0c8"/>
<rect x="199" y="319.8" width="43.2" height="0.6" fill="#fff"/>
<rect x="199" y="319.8" width="0.6" height="11.2" fill="#fff"/>
<rect x="199" y="330.4" width="43.2" height="0.6" fill="#404040"/>
<rect x="241.6" y="319.8" width="0.6" height="11.2" fill="#404040"/>
<rect x="199.6" y="320.4" width="42" height="0.6" fill="#d4d0c8"/>
<rect x="199.6" y="320.4" width="0.6" height="10" fill="#d4d0c8"/>
<rect x="199.6" y="329.8" width="42" height="0.6" fill="#808080"/>
<rect x="241" y="320.4" width="0.6" height="10" fill="#808080"/>
<text x="220.6" y="327.7" font-size="6.6" fill="#000" stroke="#000" stroke-width="0.28" text-anchor="middle" font-weight="bold" textLength="28" lengthAdjust="spacingAndGlyphs">Drucken</text>
<rect x="206.6" y="328.6" width="5" height="0.6" fill="#000"/>
<rect x="247.4" y="319.8" width="42.6" height="11.2" fill="#d4d0c8"/>
<rect x="247.4" y="319.8" width="42.6" height="0.6" fill="#fff"/>
<rect x="247.4" y="319.8" width="0.6" height="11.2" fill="#fff"/>
<rect x="247.4" y="330.4" width="42.6" height="0.6" fill="#404040"/>
<rect x="289.4" y="319.8" width="0.6" height="11.2" fill="#404040"/>
<rect x="248" y="320.4" width="41.4" height="0.6" fill="#d4d0c8"/>
<rect x="248" y="320.4" width="0.6" height="10" fill="#d4d0c8"/>
<rect x="248" y="329.8" width="41.4" height="0.6" fill="#808080"/>
<rect x="288.8" y="320.4" width="0.6" height="10" fill="#808080"/>
<text x="268.7" y="327.7" font-size="6.6" fill="#000" stroke="#000" stroke-width="0.28" text-anchor="middle" font-weight="bold" textLength="33" lengthAdjust="spacingAndGlyphs">Speichern</text>
<rect x="252.2" y="328.6" width="4.6" height="0.6" fill="#000"/>
<rect x="267.3" y="163.5" width="325.9" height="271.9" fill="#d4d0c8"/>
<rect x="267.3" y="163.5" width="325.9" height="0.6" fill="#d4d0c8"/>
<rect x="267.3" y="163.5" width="0.6" height="271.9" fill="#d4d0c8"/>
<rect x="267.3" y="434.8" width="325.9" height="0.6" fill="#404040"/>
<rect x="592.6" y="163.5" width="0.6" height="271.9" fill="#404040"/>
<rect x="267.9" y="164.1" width="324.7" height="0.6" fill="#fff"/>
<rect x="267.9" y="164.1" width="0.6" height="270.7" fill="#fff"/>
<rect x="267.9" y="434.2" width="324.7" height="0.6" fill="#808080"/>
<rect x="592" y="164.1" width="0.6" height="270.7" fill="#808080"/>
<rect x="269.1" y="165.6" width="322.3" height="10.6" fill="url(#ga)"/>
<path d="M271.4 167.2 H276.4 L278.0 168.8 V175.0 H271.4 Z" stroke="#c8d0e8" stroke-width="0.4" fill="#eceffa"/>
<rect x="272.2" y="168.8" width="2.2" height="2.4" fill="#304888"/>
<rect x="275" y="170.2" width="1.8" height="2.2" fill="#5070b0"/>
<rect x="272.4" y="172.6" width="4.2" height="1.4" fill="#384c90"/>
<text x="280.6" y="173.8" font-size="7.4" fill="#fff" stroke="#fff" stroke-width="0.28" font-weight="bold" textLength="161.4" lengthAdjust="spacingAndGlyphs">Analyse 11 ,Blizzard SRB 5900 16.06.2007 13:38</text>
<rect x="581.4" y="167" width="8.8" height="7.8" fill="#d4d0c8"/>
<rect x="581.4" y="167" width="8.8" height="0.6" fill="#fff"/>
<rect x="581.4" y="167" width="0.6" height="7.8" fill="#fff"/>
<rect x="581.4" y="174.2" width="8.8" height="0.6" fill="#404040"/>
<rect x="589.6" y="167" width="0.6" height="7.8" fill="#404040"/>
<rect x="582" y="167.6" width="7.6" height="0.6" fill="#d4d0c8"/>
<rect x="582" y="167.6" width="0.6" height="6.6" fill="#d4d0c8"/>
<rect x="582" y="173.6" width="7.6" height="0.6" fill="#808080"/>
<rect x="589" y="167.6" width="0.6" height="6.6" fill="#808080"/>
<path d="M583.4 168.8 L587.8 172.9 M587.8 168.8 L583.4 172.9" stroke="#000" stroke-width="0.85" fill="none"/>
<rect x="273.4" y="181.7" width="243.8" height="73.5" fill="#fff"/>
<rect x="273.4" y="181.7" width="243.8" height="0.6" fill="#808080"/>
<rect x="273.4" y="181.7" width="0.6" height="73.5" fill="#808080"/>
<rect x="273.4" y="254.6" width="243.8" height="0.6" fill="#fff"/>
<rect x="516.6" y="181.7" width="0.6" height="73.5" fill="#fff"/>
<rect x="274" y="182.3" width="242.6" height="0.6" fill="#404040"/>
<rect x="274" y="182.3" width="0.6" height="72.3" fill="#404040"/>
<rect x="274" y="254" width="242.6" height="0.6" fill="#d4d0c8"/>
<rect x="516" y="182.3" width="0.6" height="72.3" fill="#d4d0c8"/>
<line x1="274.6" y1="218.9" x2="516" y2="218.9" stroke="#303030" stroke-width="0.9"/>
<line x1="324.4" y1="182.9" x2="324.4" y2="254" stroke="#203060" stroke-width="0.75"/>
<line x1="372.8" y1="182.9" x2="372.8" y2="254" stroke="#30a040" stroke-width="0.75"/>
<line x1="420.8" y1="182.9" x2="420.8" y2="254" stroke="#208080" stroke-width="0.75"/>
<line x1="469.3" y1="182.9" x2="469.3" y2="254" stroke="#902030" stroke-width="0.75"/>
<line x1="275" y1="182.4" x2="275" y2="254" stroke="#505050" stroke-width="0.7"/>
<path d="M274.6 216.6 L275.41 219 L276.22 226 L277.23 231.6 L278.65 233.4 L280.67 233.9 L283.71 234.4 L286.75 234 L288.37 232.6 L289.99 228 L291.41 224 L292.62 222.6 L294.85 222 L298.49 221.4 L299.3 219.6 L300.11 216.2 L301.12 215 L302.95 213.4 L305.98 211 L309.02 209.2 L312.06 208.2 L315.1 208.6 L318.13 210.6 L320.77 213.2 L322.59 215.4 L323.6 216.6 L324.4 219 L325.2 226 L326.21 231.6 L327.61 233.4 L329.61 233.9 L332.62 234.4 L335.62 234 L337.23 232.6 L338.83 228 L340.23 224 L341.44 222.6 L343.64 222 L347.25 221.4 L348.05 219.6 L348.85 216.2 L349.85 215 L351.66 213.4 L354.66 211 L357.67 209.2 L360.68 208.2 L363.68 208.6 L366.69 210.6 L369.29 213.2 L371.1 215.4 L372.1 216.6 L372.89 219 L373.69 226 L374.68 231.6 L376.07 233.4 L378.05 233.9 L381.03 234.4 L384 234 L385.59 232.6 L387.17 228 L388.56 224 L389.75 222.6 L391.93 222 L395.5 221.4 L396.3 219.6 L397.09 216.2 L398.08 215 L399.87 213.4 L402.84 211 L405.82 209.2 L408.79 208.2 L411.77 208.6 L414.74 210.6 L417.32 213.2 L419.11 215.4 L420.1 216.6 L420.9 219 L421.7 226 L422.71 231.6 L424.11 233.4 L426.11 233.9 L429.12 234.4 L432.12 234 L433.73 232.6 L435.33 228 L436.73 224 L437.94 222.6 L440.14 222 L443.75 221.4 L444.55 219.6 L445.35 216.2 L446.35 215 L448.16 213.4 L451.16 211 L454.17 209.2 L457.18 208.2 L460.18 208.6 L463.19 210.6 L465.79 213.2 L467.6 215.4 L468.6 216.6 L469.4 219 L470.2 226 L471.21 231.6 L472.61 233.4 L474.61 233.9 L477.62 234.4 L480.62 234 L482.23 232.6 L483.83 228 L485.23 224 L486.44 222.6 L488.64 222 L492.25 221.4 L493.05 219.6 L493.85 216.2 L494.85 215 L496.66 213.4 L499.66 211 L502.67 209.2 L505.68 208.2 L508.68 208.6 L511.69 210.6 L514.29 213.2 L516.1 215.4 L517.1 216.6" stroke="#0c6c48" stroke-width="0.85" fill="none" stroke-linejoin="round" clip-path="url(#c3)"/>
<path d="M274.6 185.2 L274.9 186.6 L275.72 188 L277.15 190.3 L278.37 190.7 L286.13 190.7 L289.19 190.1 L293.27 188.7 L297.35 187.5 L301.44 186.9 L315.73 186.7 L324.3 186.6 L325.1 188 L326.5 190.3 L327.71 190.7 L335.32 190.7 L338.33 190.1 L342.34 188.7 L346.35 187.5 L350.35 186.9 L364.38 186.7 L372.8 186.6 L373.59 188 L374.98 190.3 L376.17 190.7 L383.71 190.7 L386.68 190.1 L390.65 188.7 L394.62 187.5 L398.59 186.9 L412.47 186.7 L420.8 186.6 L421.6 188 L423 190.3 L424.21 190.7 L431.82 190.7 L434.83 190.1 L438.84 188.7 L442.85 187.5 L446.85 186.9 L460.88 186.7 L469.3 186.6 L470.1 188 L471.5 190.3 L472.71 190.7 L480.32 190.7 L483.33 190.1 L487.34 188.7 L491.35 187.5 L495.35 186.9 L509.38 186.7 L517.8 186.6" stroke="#681c58" stroke-width="0.85" fill="none" stroke-linejoin="round" clip-path="url(#c3)"/>
<text x="277.6" y="225.4" font-size="7.6" fill="#000" stroke="#000" stroke-width="0.28" font-weight="bold" textLength="3.6" lengthAdjust="spacingAndGlyphs">0</text>
<rect x="526" y="182" width="58.8" height="15" fill="#000"/>
<rect x="526.6" y="182.6" width="57.6" height="13.8" fill="#d4d0c8"/>
<rect x="526.6" y="182.6" width="57.6" height="0.6" fill="#fff"/>
<rect x="526.6" y="182.6" width="0.6" height="13.8" fill="#fff"/>
<rect x="526.6" y="195.8" width="57.6" height="0.6" fill="#404040"/>
<rect x="583.6" y="182.6" width="0.6" height="13.8" fill="#404040"/>
<rect x="527.2" y="183.2" width="56.4" height="0.6" fill="#d4d0c8"/>
<rect x="527.2" y="183.2" width="0.6" height="12.6" fill="#d4d0c8"/>
<rect x="527.2" y="195.2" width="56.4" height="0.6" fill="#808080"/>
<rect x="583" y="183.2" width="0.6" height="12.6" fill="#808080"/>
<text x="555.4" y="191.8" font-size="7.4" fill="#000" stroke="#000" stroke-width="0.28" text-anchor="middle" font-weight="bold" textLength="16.6" lengthAdjust="spacingAndGlyphs">100%</text>
<rect x="547.1" y="192.7" width="3.6" height="0.6" fill="#000"/>
<rect x="528.6" y="184.6" width="53.6" height="9.8" fill="none" stroke="#000" stroke-width="0.5" stroke-dasharray="0.6 0.6"/>
<rect x="526" y="201.4" width="58.8" height="14.8" fill="#d4d0c8"/>
<rect x="526" y="201.4" width="58.8" height="0.6" fill="#fff"/>
<rect x="526" y="201.4" width="0.6" height="14.8" fill="#fff"/>
<rect x="526" y="215.6" width="58.8" height="0.6" fill="#404040"/>
<rect x="584.2" y="201.4" width="0.6" height="14.8" fill="#404040"/>
<rect x="526.6" y="202" width="57.6" height="0.6" fill="#d4d0c8"/>
<rect x="526.6" y="202" width="0.6" height="13.6" fill="#d4d0c8"/>
<rect x="526.6" y="215" width="57.6" height="0.6" fill="#808080"/>
<rect x="583.6" y="202" width="0.6" height="13.6" fill="#808080"/>
<text x="555.4" y="211.1" font-size="7.4" fill="#000" stroke="#000" stroke-width="0.28" text-anchor="middle" font-weight="bold" textLength="47.6" lengthAdjust="spacingAndGlyphs">Heranzoomen</text>
<rect x="543.2" y="212" width="3.8" height="0.6" fill="#000"/>
<rect x="526" y="221.2" width="58.8" height="14.8" fill="#d4d0c8"/>
<rect x="526" y="221.2" width="58.8" height="0.6" fill="#fff"/>
<rect x="526" y="221.2" width="0.6" height="14.8" fill="#fff"/>
<rect x="526" y="235.4" width="58.8" height="0.6" fill="#404040"/>
<rect x="584.2" y="221.2" width="0.6" height="14.8" fill="#404040"/>
<rect x="526.6" y="221.8" width="57.6" height="0.6" fill="#d4d0c8"/>
<rect x="526.6" y="221.8" width="0.6" height="13.6" fill="#d4d0c8"/>
<rect x="526.6" y="234.8" width="57.6" height="0.6" fill="#808080"/>
<rect x="583.6" y="221.8" width="0.6" height="13.6" fill="#808080"/>
<text x="555.4" y="230.9" font-size="7.4" fill="#000" stroke="#000" stroke-width="0.28" text-anchor="middle" font-weight="bold" textLength="50.4" lengthAdjust="spacingAndGlyphs">Herauszoomen</text>
<rect x="556.6" y="231.8" width="3.8" height="0.6" fill="#000"/>
<rect x="273.2" y="269.6" width="241.8" height="161.2" fill="#fff"/>
<rect x="273.2" y="269.6" width="241.8" height="0.6" fill="#808080"/>
<rect x="273.2" y="269.6" width="0.6" height="161.2" fill="#808080"/>
<rect x="273.2" y="430.2" width="241.8" height="0.6" fill="#fff"/>
<rect x="514.4" y="269.6" width="0.6" height="161.2" fill="#fff"/>
<rect x="273.8" y="270.2" width="240.6" height="0.6" fill="#404040"/>
<rect x="273.8" y="270.2" width="0.6" height="160" fill="#404040"/>
<rect x="273.8" y="429.6" width="240.6" height="0.6" fill="#d4d0c8"/>
<rect x="513.8" y="270.2" width="0.6" height="160" fill="#d4d0c8"/>
<line x1="274.2" y1="310.8" x2="513.8" y2="310.8" stroke="#a0a0a0" stroke-width="0.8"/>
<line x1="274.4" y1="349.7" x2="513.8" y2="349.7" stroke="#707070" stroke-width="1"/>
<line x1="274.4" y1="389.2" x2="513.8" y2="389.2" stroke="#a0a0a0" stroke-width="0.8"/>
<text x="275.6" y="277.4" font-size="7.8" fill="#000" stroke="#000" stroke-width="0.28" font-weight="bold" textLength="31.6" lengthAdjust="spacingAndGlyphs">10 [mbar]</text>
<text x="277.6" y="316.6" font-size="7.8" fill="#000" stroke="#000" stroke-width="0.28" font-weight="bold" textLength="4" lengthAdjust="spacingAndGlyphs">5</text>
<text x="277.6" y="356.8" font-size="7.8" fill="#000" stroke="#000" stroke-width="0.28" font-weight="bold" textLength="4" lengthAdjust="spacingAndGlyphs">0</text>
<text x="275.8" y="396" font-size="7.8" fill="#000" stroke="#000" stroke-width="0.28" font-weight="bold" textLength="6.2" lengthAdjust="spacingAndGlyphs">-5</text>
<line x1="323.4" y1="421.4" x2="323.4" y2="429.6" stroke="#98a0b0" stroke-width="0.7"/>
<text x="326.2" y="425.5" font-size="7.8" fill="#000" stroke="#000" stroke-width="0.28" font-weight="bold" textLength="10" lengthAdjust="spacingAndGlyphs">2,5</text>
<line x1="352.5" y1="421.4" x2="352.5" y2="429.6" stroke="#98a0b0" stroke-width="0.7"/>
<text x="355.3" y="425.5" font-size="7.8" fill="#000" stroke="#000" stroke-width="0.28" font-weight="bold" textLength="10" lengthAdjust="spacingAndGlyphs">2,0</text>
<line x1="381.6" y1="421.4" x2="381.6" y2="429.6" stroke="#98a0b0" stroke-width="0.7"/>
<text x="384.4" y="425.5" font-size="7.8" fill="#000" stroke="#000" stroke-width="0.28" font-weight="bold" textLength="10" lengthAdjust="spacingAndGlyphs">1,5</text>
<line x1="410.7" y1="421.4" x2="410.7" y2="429.6" stroke="#98a0b0" stroke-width="0.7"/>
<text x="413.5" y="425.5" font-size="7.8" fill="#000" stroke="#000" stroke-width="0.28" font-weight="bold" textLength="10" lengthAdjust="spacingAndGlyphs">1,0</text>
<line x1="439.8" y1="421.4" x2="439.8" y2="429.6" stroke="#98a0b0" stroke-width="0.7"/>
<text x="442.6" y="425.5" font-size="7.8" fill="#000" stroke="#000" stroke-width="0.28" font-weight="bold" textLength="10" lengthAdjust="spacingAndGlyphs">0,5</text>
<line x1="468.9" y1="421.4" x2="468.9" y2="429.6" stroke="#98a0b0" stroke-width="0.7"/>
<text x="471.7" y="425.5" font-size="7.8" fill="#000" stroke="#000" stroke-width="0.28" font-weight="bold" textLength="21" lengthAdjust="spacingAndGlyphs">0,0 [l]</text>
<path d="M326.6 338.2 L327.6 340.6 L329.2 338.6 L330.4 340 L332 338.4 L334 339 L336 337.8 L342 335.6 L350 332.8 L358 330.4 L366 328.4 L374 326.9 L382 326 L390 325.8 L398 326.2 L406 327.2 L414 328.8 L422 330.8 L430 333.2 L438 335.8 L446 338.4 L454 341 L460.6 343.2 L463.4 345.6 L466 348.6 L467.8 351.4 L467.4 356 L466.6 362 L465.4 368 L464.6 374.4 L463.8 372 L462.4 375.4 L460.6 377.6 L458 378.2 L455 380.4 L452 380 L448 381.8 L444 382 L440 383.4 L436 383 L432 384.4 L428 383.6 L424 384.6 L420 383.8 L416 384.6 L412 383.2 L408 384.2 L404 383 L400 383.6 L396.8 383.2 L393 381 L389 377.6 L385 373.6 L381.6 370.6 L378 367 L374 363.6 L370 361 L366 359.8 L360 359.4 L352 359 L344 358.4 L336 358.2 L330.6 357.8 L327.4 355.6 L325 352.6 L323.6 349.6 L323.6 346.4 L324.6 343 L326.6 338.2" stroke="#209880" stroke-width="1.2" fill="none" stroke-linejoin="round" opacity="0.3"/>
<path d="M326.6 338.2 L327.6 340.6 L329.2 338.6 L330.4 340 L332 338.4 L334 339 L336 337.8 L342 335.6 L350 332.8 L358 330.4 L366 328.4 L374 326.9 L382 326 L390 325.8 L398 326.2 L406 327.2 L414 328.8 L422 330.8 L430 333.2 L438 335.8 L446 338.4 L454 341 L460.6 343.2 L463.4 345.6 L466 348.6 L467.8 351.4 L467.4 356 L466.6 362 L465.4 368 L464.6 374.4 L463.8 372 L462.4 375.4 L460.6 377.6 L458 378.2 L455 380.4 L452 380 L448 381.8 L444 382 L440 383.4 L436 383 L432 384.4 L428 383.6 L424 384.6 L420 383.8 L416 384.6 L412 383.2 L408 384.2 L404 383 L400 383.6 L396.8 383.2 L393 381 L389 377.6 L385 373.6 L381.6 370.6 L378 367 L374 363.6 L370 361 L366 359.8 L360 359.4 L352 359 L344 358.4 L336 358.2 L330.6 357.8 L327.4 355.6 L325 352.6 L323.6 349.6 L323.6 346.4 L324.6 343 L326.6 338.2" stroke="#241414" stroke-width="0.9" fill="none" stroke-linejoin="round"/>
<text x="559.8" y="276" font-size="7.6" fill="#000" stroke="#000" stroke-width="0.28" text-anchor="end" font-weight="bold" textLength="16.2" lengthAdjust="spacingAndGlyphs">6076</text>
<text x="565.2" y="276" font-size="7.6" fill="#000" stroke="#000" stroke-width="0.28" font-weight="bold" textLength="8.6" lengthAdjust="spacingAndGlyphs">ms</text>
<text x="559.8" y="285.8" font-size="7.6" fill="#000" stroke="#000" stroke-width="0.28" text-anchor="end" font-weight="bold" textLength="14.6" lengthAdjust="spacingAndGlyphs">1,10</text>
<text x="565.2" y="285.8" font-size="7.6" fill="#000" stroke="#000" stroke-width="0.28" font-weight="bold" textLength="16.4" lengthAdjust="spacingAndGlyphs">mbar</text>
<text x="559.8" y="295.4" font-size="7.6" fill="#000" stroke="#000" stroke-width="0.28" text-anchor="end" font-weight="bold" textLength="14.6" lengthAdjust="spacingAndGlyphs">8,86</text>
<text x="565.2" y="295.4" font-size="7.6" fill="#000" stroke="#000" stroke-width="0.28" font-weight="bold" textLength="10.8" lengthAdjust="spacingAndGlyphs">bar</text>
<rect x="527" y="314" width="57.2" height="95.6" fill="none" stroke="#fff" stroke-width="0.6"/>
<rect x="526.4" y="313.4" width="57.2" height="95.6" fill="none" stroke="#808080" stroke-width="0.6"/>
<rect x="530.4" y="311.4" width="38.8" height="4" fill="#d4d0c8"/>
<text x="531.4" y="315.2" font-size="7.6" fill="#000" stroke="#000" stroke-width="0.28" font-weight="bold" textLength="36.8" lengthAdjust="spacingAndGlyphs">Atemarbeit</text>
<text x="528.8" y="327.8" font-size="6.8" fill="#000" textLength="10.6" lengthAdjust="spacingAndGlyphs">Aus</text>
<text x="575" y="328.8" font-size="9.6" fill="#1820a0" stroke="#1820a0" stroke-width="0.4" text-anchor="end" textLength="19.4" lengthAdjust="spacingAndGlyphs">0,25</text>
<text x="528.8" y="346.4" font-size="6.8" fill="#000" textLength="8.6" lengthAdjust="spacingAndGlyphs">Ein</text>
<text x="575" y="346.4" font-size="9.6" fill="#1820a0" stroke="#1820a0" stroke-width="0.4" text-anchor="end" textLength="19.4" lengthAdjust="spacingAndGlyphs">0,32</text>
<text x="528.8" y="363.8" font-size="8.4" fill="#000" stroke="#000" stroke-width="0.15" textLength="9.2" lengthAdjust="spacingAndGlyphs" font-family="Liberation Serif, serif">Σ=</text>
<text x="575" y="364.4" font-size="9.6" fill="#107818" stroke="#107818" stroke-width="0.4" text-anchor="end" textLength="19.4" lengthAdjust="spacingAndGlyphs">0,57</text>
<text x="555.2" y="402" font-size="6.8" fill="#000" text-anchor="middle" textLength="31.4" lengthAdjust="spacingAndGlyphs">Joule/Liter</text>
<rect x="525.8" y="415" width="58.8" height="14.8" fill="#d4d0c8"/>
<rect x="525.8" y="415" width="58.8" height="0.6" fill="#fff"/>
<rect x="525.8" y="415" width="0.6" height="14.8" fill="#fff"/>
<rect x="525.8" y="429.2" width="58.8" height="0.6" fill="#404040"/>
<rect x="584" y="415" width="0.6" height="14.8" fill="#404040"/>
<rect x="526.4" y="415.6" width="57.6" height="0.6" fill="#d4d0c8"/>
<rect x="526.4" y="415.6" width="0.6" height="13.6" fill="#d4d0c8"/>
<rect x="526.4" y="428.6" width="57.6" height="0.6" fill="#808080"/>
<rect x="583.4" y="415.6" width="0.6" height="13.6" fill="#808080"/>
<text x="555.2" y="424.7" font-size="6.6" fill="#000" stroke="#000" stroke-width="0.28" text-anchor="middle" font-weight="bold" textLength="35.6" lengthAdjust="spacingAndGlyphs">Schliessen</text>
<rect x="537.4" y="425.6" width="4.6" height="0.6" fill="#000"/>
</g>
</svg>
</body>
</html>
